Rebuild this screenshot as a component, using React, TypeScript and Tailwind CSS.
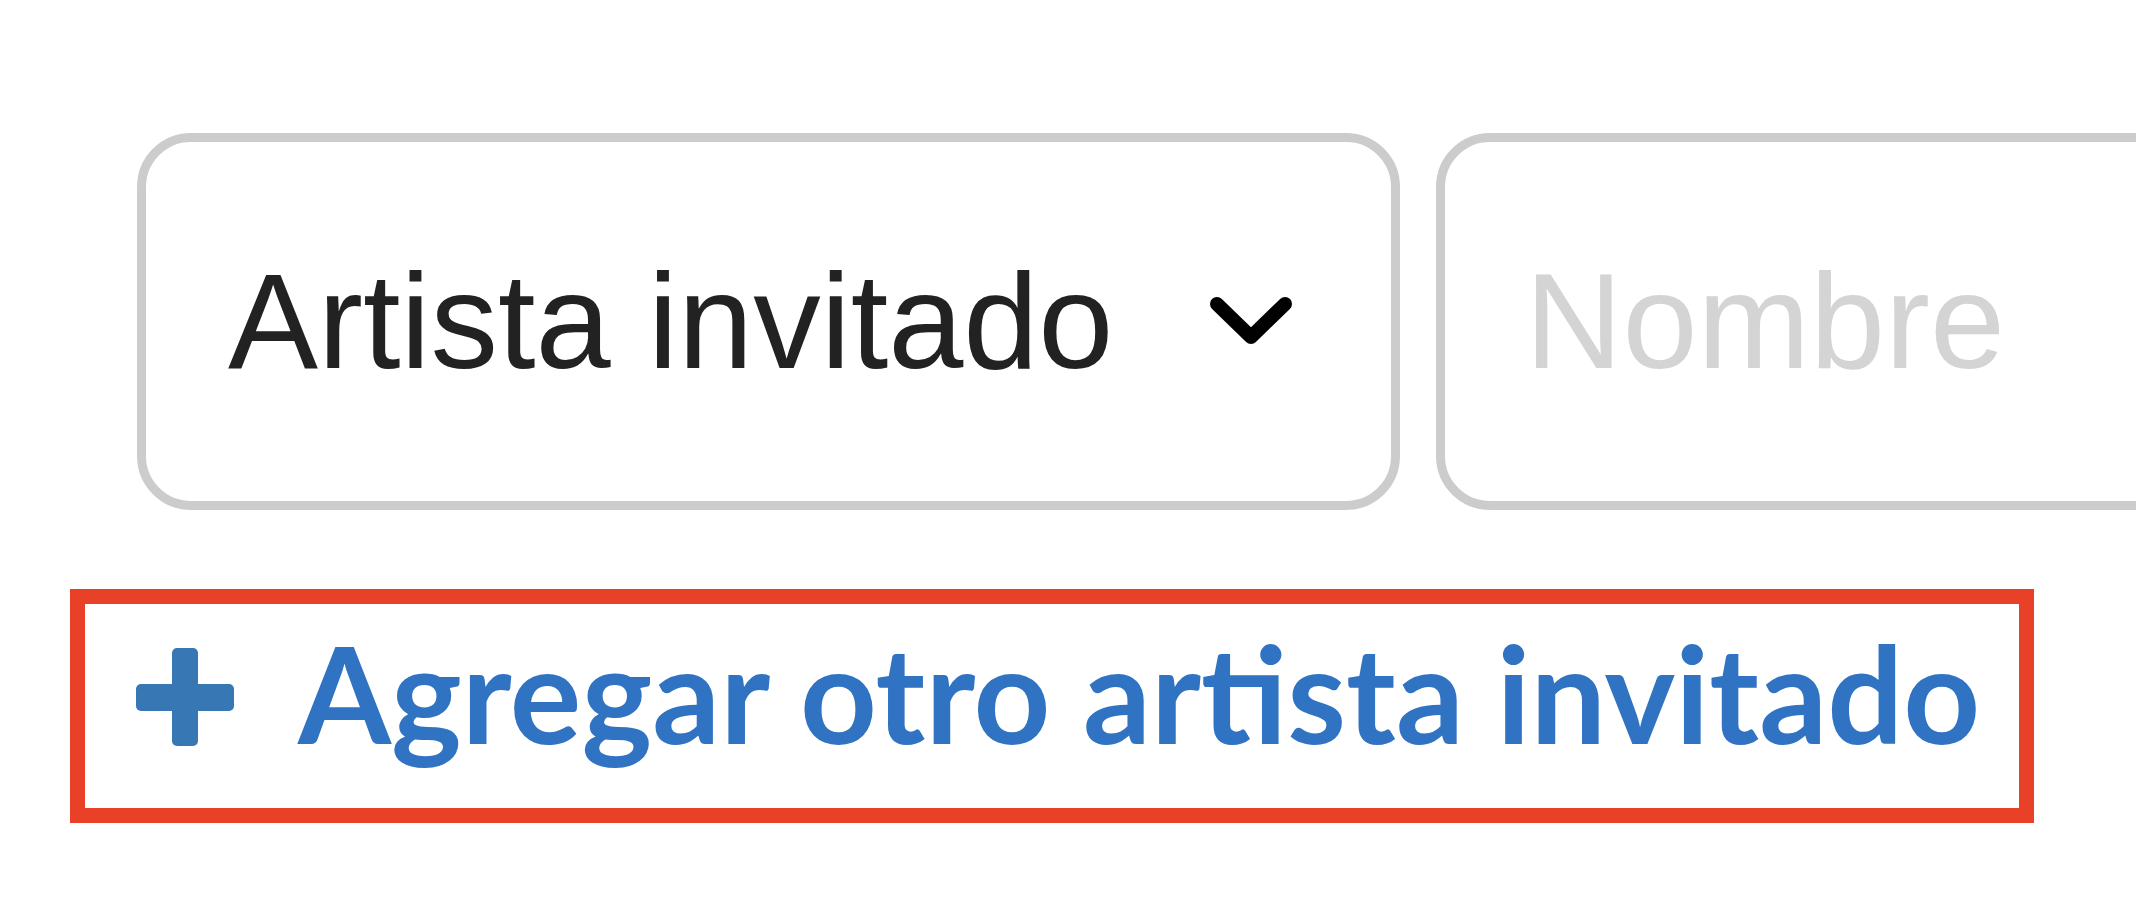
import React from "react";

export default function App() {
  const [role, setRole] = React.useState("Artista invitado");
  const [name, setName] = React.useState("");

  return (
    <div className="h-[918px] w-full overflow-hidden bg-white">
      <div className="flex gap-[36px] pl-[137px] pt-[133px]">
        <div className="flex h-[377px] w-[1263px] shrink-0 items-center justify-between rounded-[54px] border-[9px] border-[#cccccc] pl-[82px] pr-[98px]">
          <span className="font-['Liberation_Sans',Arial,sans-serif] text-[135px] leading-none text-[#222222]">
            {role}
          </span>
          <svg width="84" height="52" viewBox="0 0 84 52" className="shrink-0">
            <polyline
              points="8,8 42,41 76,8"
              fill="none"
              stroke="#000000"
              strokeWidth="14"
              strokeLinecap="round"
              strokeLinejoin="round"
            />
          </svg>
        </div>
        <div className="flex h-[377px] w-[1200px] shrink-0 items-center rounded-[54px] border-[9px] border-[#cccccc] pl-[80px]">
          <input
            value={name}
            onChange={(e) => setName(e.target.value)}
            placeholder="Nombre"
            className="w-full bg-transparent font-['Liberation_Sans',Arial,sans-serif] text-[135px] leading-none text-[#222222] outline-none placeholder:text-[#d4d4d4]"
          />
        </div>
      </div>

      <div className="ml-[70px] mt-[79px] flex h-[234px] w-[1964px] items-center border-[15px] border-[#e94128] pb-[18px] pl-[51px]">
        <button
          type="button"
          onClick={() => setRole("Artista invitado")}
          className="flex items-center gap-[64px]"
        >
          <svg width="98" height="98" viewBox="0 0 98 98" className="shrink-0">
            <rect x="36" y="0" width="26" height="98" rx="5" fill="#3778b4" />
            <rect x="0" y="36" width="98" height="27" rx="5" fill="#3778b4" />
          </svg>
          <span className="mb-[8px] font-['Lato',sans-serif] text-[134px] font-bold leading-none text-[#3073c3]">
            Agregar otro artista invitado
          </span>
        </button>
      </div>
    </div>
  );
}
